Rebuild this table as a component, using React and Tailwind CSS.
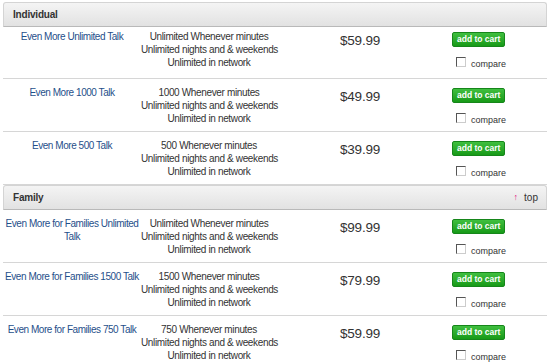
import React from 'react';

const individual = [
  { name: 'Even More Unlimited Talk', minutes: 'Unlimited Whenever minutes', price: '$59.99' },
  { name: 'Even More 1000 Talk', minutes: '1000 Whenever minutes', price: '$49.99' },
  { name: 'Even More 500 Talk', minutes: '500 Whenever minutes', price: '$39.99' },
];

const family = [
  { name: 'Even More for Families Unlimited Talk', minutes: 'Unlimited Whenever minutes', price: '$99.99' },
  { name: 'Even More for Families 1500 Talk', minutes: '1500 Whenever minutes', price: '$79.99' },
  { name: 'Even More for Families 750 Talk', minutes: '750 Whenever minutes', price: '$59.99' },
];

function SectionHeader({ title, showTop }) {
  return (
    <div className="flex items-center justify-between h-[25px] pl-[9px] pr-[8px] rounded-t-[3px] border border-[#d4d4d4] border-b-[#b9b9b9] bg-gradient-to-b from-[#f4f4f4] to-[#e2e2e2]">
      <span className="text-[10px] font-bold text-[#333] tracking-[-0.2px]">{title}</span>
      {showTop && (
        <span className="flex items-center gap-[6px] text-[10px] text-[#333]">
          <span className="text-[#e0157f] text-[9px] leading-none">↑</span>
          top
        </span>
      )}
    </div>
  );
}

function PlanRow({ plan, first }) {
  return (
    <div
      className={
        first
          ? 'grid grid-cols-[138px_136px_166px_1fr] h-[52px] pt-[3px] border-b border-[#d6d6d6] text-[10px] leading-[13px]'
          : 'grid grid-cols-[138px_136px_166px_1fr] h-[53px] pt-[7px] border-b border-[#d6d6d6] text-[10px] leading-[13px]'
      }
    >
      <div className="text-center text-[#1f4f8a] tracking-[-0.45px]">{plan.name}</div>
      <div className="text-center text-[#333] whitespace-nowrap tracking-[-0.35px]">
        <div>{plan.minutes}</div>
        <div>Unlimited nights and &amp; weekends</div>
        <div>Unlimited in network</div>
      </div>
      <div className="text-center text-[#333] text-[13.5px] leading-[16px] pt-[3px] tracking-[-0.2px]">{plan.price}</div>
      <div className="flex flex-col items-start pl-[9px] pt-[2px]">
        <button className="h-[15px] px-[4px] rounded-[2px] border border-[#16861a] bg-gradient-to-b from-[#3fbf3f] to-[#169a16] text-white text-[8.5px] font-bold leading-none">
          add to cart
        </button>
        <label className="flex items-end gap-[5px] mt-[10px] ml-[4px] text-[9px] leading-none text-[#333]">
          <span className="w-[10px] h-[10px] border border-[#555] border-r-[#ccc] border-b-[#ccc] bg-white inline-block" />
          <span className="-mb-[2px]">compare</span>
        </label>
      </div>
    </div>
  );
}

export default function App() {
  return (
    <div className="w-[550px] h-[364px] overflow-hidden bg-white pt-[2px] px-[3px] font-['Liberation_Sans',Arial,sans-serif]">
      <SectionHeader title="Individual" />
      {individual.map((p, i) => (
        <PlanRow key={p.name} plan={p} first={i === 0} />
      ))}
      <SectionHeader title="Family" showTop />
      {family.map((p) => (
        <PlanRow key={p.name} plan={p} />
      ))}
    </div>
  );
}
